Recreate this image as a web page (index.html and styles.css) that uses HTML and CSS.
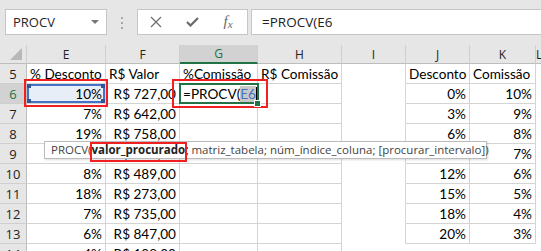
FILE: index.html
```html
<!DOCTYPE html>
<html lang="pt-BR">
<head>
    <meta charset="UTF-8">
    <title>PROCV</title>
    <link rel="stylesheet" href="styles.css">
</head>
<body>
    <div class="app">
        <!-- Barra de fórmulas -->
        <div class="bar">
            <div class="name-box"><span>PROCV</span><span class="caret"></span></div>
            <div class="grip"><i></i><i></i><i></i></div>
            <div class="fx-buttons">
                <span class="fx-btn">
                    <svg width="12" height="12" viewBox="0 0 12 12"><path d="M1 1 L11 11 M11 1 L1 11" stroke="#707070" stroke-width="1.3" fill="none"/></svg>
                </span>
                <span class="fx-btn">
                    <svg width="13" height="10" viewBox="0 0 13 10"><path d="M1 5 L4.5 8.5 L12 1" stroke="#6a6a6a" stroke-width="2.2" fill="none"/></svg>
                </span>
                <span class="fx-btn fx-label"><i>f</i><i class="x">x</i></span>
            </div>
            <div class="formula">=PROCV(E6</div>
        </div>

        <!-- Planilha -->
        <div class="sheet">
            <div class="ch corner"><span class="tri"></span></div>
            <div class="ch">E</div>
            <div class="ch">F</div>
            <div class="ch sel">G</div>
            <div class="ch">H</div>
            <div class="ch">I</div>
            <div class="ch">J</div>
            <div class="ch">K</div>
            <div class="ch">L</div>

            <div class="rh">5</div>
            <div class="c">% Desconto</div>
            <div class="c">R$ Valor</div>
            <div class="c">%Comissão</div>
            <div class="c">R$ Comissão</div>
            <div class="c w edge"></div>
            <div class="c t">Desconto</div>
            <div class="c t">Comissão</div>
            <div class="c w"></div>

            <div class="rh sel">6</div>
            <div class="c r ref">10%<i class="h tl"></i><i class="h tr"></i><i class="h bl"></i><i class="h br"></i></div>
            <div class="c r">R$ 727,00</div>
            <div class="c act">=PROCV(<span class="hl">E6</span><span class="cursor"></span></div>
            <div class="c"></div>
            <div class="c w edge"></div>
            <div class="c t r">0%</div>
            <div class="c t r">10%</div>
            <div class="c w"></div>

            <div class="rh">7</div>
            <div class="c r">7%</div>
            <div class="c r">R$ 642,00</div>
            <div class="c"></div>
            <div class="c"></div>
            <div class="c w edge"></div>
            <div class="c t r">3%</div>
            <div class="c t r">9%</div>
            <div class="c w"></div>

            <div class="rh">8</div>
            <div class="c r">19%</div>
            <div class="c r">R$ 758,00</div>
            <div class="c"></div>
            <div class="c"></div>
            <div class="c w edge"></div>
            <div class="c t r">6%</div>
            <div class="c t r">8%</div>
            <div class="c w"></div>

            <div class="rh">9</div>
            <div class="c r">11%</div>
            <div class="c r">R$ 516,00</div>
            <div class="c"></div>
            <div class="c"></div>
            <div class="c w edge"></div>
            <div class="c t r">9%</div>
            <div class="c t r">7%</div>
            <div class="c w"></div>

            <div class="rh">10</div>
            <div class="c r">8%</div>
            <div class="c r">R$ 489,00</div>
            <div class="c"></div>
            <div class="c"></div>
            <div class="c w edge"></div>
            <div class="c t r">12%</div>
            <div class="c t r">6%</div>
            <div class="c w"></div>

            <div class="rh">11</div>
            <div class="c r">18%</div>
            <div class="c r">R$ 273,00</div>
            <div class="c"></div>
            <div class="c"></div>
            <div class="c w edge"></div>
            <div class="c t r">15%</div>
            <div class="c t r">5%</div>
            <div class="c w"></div>

            <div class="rh">12</div>
            <div class="c r">7%</div>
            <div class="c r">R$ 735,00</div>
            <div class="c"></div>
            <div class="c"></div>
            <div class="c w edge"></div>
            <div class="c t r">18%</div>
            <div class="c t r">4%</div>
            <div class="c w"></div>

            <div class="rh">13</div>
            <div class="c r">6%</div>
            <div class="c r">R$ 847,00</div>
            <div class="c"></div>
            <div class="c"></div>
            <div class="c w edge"></div>
            <div class="c t r">20%</div>
            <div class="c t r">3%</div>
            <div class="c w"></div>

            <div class="rh">14</div>
            <div class="c r">4%</div>
            <div class="c r">R$ 198,00</div>
            <div class="c"></div>
            <div class="c"></div>
            <div class="c w"></div>
            <div class="c w"></div>
            <div class="c w"></div>
            <div class="c w"></div>
        </div>

        <!-- Dica da função -->
        <div class="tip">PROCV(<b>valor_procurado;</b> matriz_tabela; núm_índice_coluna; [procurar_intervalo])</div>

        <!-- Marcações vermelhas -->
        <div class="mark mark-ref"></div>
        <div class="mark mark-act"></div>
        <div class="mark mark-tip"></div>
    </div>
</body>
</html>
```

FILE: styles.css
```css
body {
    margin: 0;
    background: #fff;
    font-family: "Open Sans", sans-serif;
}

.app {
    position: relative;
    width: 541px;
    height: 251px;
    overflow: hidden;
}

/* barra de fórmulas */
.bar {
    height: 45px;
    box-sizing: border-box;
    padding-top: 9px;
    background: #e6e6e6;
    display: flex;
    align-items: flex-start;
}

.name-box {
    margin-left: 5px;
    width: 102px;
    height: 26px;
    box-sizing: border-box;
    background: #fff;
    border: 1px solid #c6c6c6;
    display: flex;
    align-items: center;
    justify-content: space-between;
    padding: 0 7px 0 7px;
    font-size: 13px;
    color: #262626;
}

.caret {
    border-left: 4px solid transparent;
    border-right: 4px solid transparent;
    border-top: 4px solid #777;
}

.grip {
    width: 2px;
    margin: 8px 14px 0 14px;
    display: flex;
    flex-direction: column;
    gap: 3px;
}

.grip i {
    width: 2px;
    height: 2px;
    background: #a8a8a8;
}

.fx-buttons {
    width: 111px;
    height: 26px;
    box-sizing: border-box;
    background: #fff;
    border: 1px solid #c6c6c6;
    display: flex;
    align-items: center;
}

.fx-btn {
    width: 36px;
    display: flex;
    justify-content: center;
    align-items: center;
}

.fx-label {
    font-family: "Liberation Serif", serif;
    font-size: 15px;
    color: #6a6a6a;
    padding-bottom: 2px;
}

.fx-label .x {
    font-size: 11px;
    margin-top: 5px;
}

.formula {
    margin-left: 3px;
    flex: 1;
    height: 26px;
    box-sizing: border-box;
    background: #fff;
    border: 1px solid #c6c6c6;
    border-right: none;
    padding-left: 10px;
    font-size: 13.5px;
    line-height: 24px;
    color: #222;
}

/* grade */
.sheet {
    display: grid;
    grid-template-columns: 27px 79px 74px 78px 84px 64px 64px 66px 1fr;
    grid-template-rows: 19px repeat(10, 20px);
}

.ch, .rh {
    box-sizing: border-box;
    background: #e6e6e6;
    font-size: 12px;
    color: #222;
    display: flex;
    align-items: center;
    justify-content: center;
}

.ch {
    border-right: 1px solid #cfcfcf;
    border-bottom: 1px solid #bdbdbd;
}

.rh {
    border-right: 1px solid #bdbdbd;
    border-bottom: 1px solid #cfcfcf;
    font-size: 13px;
}

.ch.sel {
    background: #d2d2d2;
    color: #217346;
    border-bottom: 2px solid #217346;
}

.rh.sel {
    background: #d2d2d2;
    color: #217346;
}

.corner {
    position: relative;
}

.tri {
    position: absolute;
    right: 4px;
    bottom: 3px;
    border-left: 12px solid transparent;
    border-bottom: 12px solid #b8b8b8;
}

.c {
    position: relative;
    box-sizing: border-box;
    border-right: 1px solid #d4d4d4;
    border-bottom: 1px solid #d4d4d4;
    padding: 0 3px;
    font-family: "Lato", sans-serif;
    font-size: 13.6px;
    line-height: 20px;
    color: #000;
    white-space: nowrap;
}

.r {
    text-align: right;
}

.w {
    border-color: transparent;
}

.w.edge {
    border-right-color: #d4d4d4;
}

.t {
    background: #fff;
}

/* referência E6 */
.ref {
    background: #e8eef8;
    box-shadow: inset 0 0 0 2px #4472c4;
}

.ref .h {
    position: absolute;
    width: 4px;
    height: 4px;
    background: #2f5597;
}

.ref .tl { left: 0; top: 0; }
.ref .tr { right: 0; top: 0; }
.ref .bl { left: 0; bottom: 0; }
.ref .br { right: 0; bottom: 0; }

/* célula ativa G6 */
.act::after {
    content: "";
    position: absolute;
    left: -1px;
    top: -1px;
    right: -2px;
    bottom: -1px;
    border: 2px solid #217346;
}

.act::before {
    content: "";
    position: absolute;
    right: -4px;
    bottom: -4px;
    width: 5px;
    height: 5px;
    background: #217346;
    border: 1px solid #fff;
    z-index: 1;
}

.hl {
    background: #c8c8c8;
    color: #4472c4;
}

.cursor {
    display: inline-block;
    width: 1px;
    height: 15px;
    background: #000;
    vertical-align: -3px;
}

/* dica */
.tip {
    position: absolute;
    left: 44px;
    top: 141px;
    width: 443px;
    height: 18px;
    box-sizing: border-box;
    background: #fff;
    border: 1px solid #bcbcbc;
    box-shadow: 1px 1px 2px rgba(0, 0, 0, 0.15);
    padding-left: 6px;
    font-size: 11.5px;
    line-height: 16px;
    color: #444;
    white-space: nowrap;
}

.tip b {
    color: #222;
}

.mark {
    position: absolute;
    border: 2px solid #f02020;
    box-sizing: border-box;
}

.mark-ref { left: 24px; top: 79px; width: 84px; height: 28px; }
.mark-act { left: 172px; top: 79px; width: 96px; height: 29px; }
.mark-tip { left: 90px; top: 142px; width: 97px; height: 20px; }
```
